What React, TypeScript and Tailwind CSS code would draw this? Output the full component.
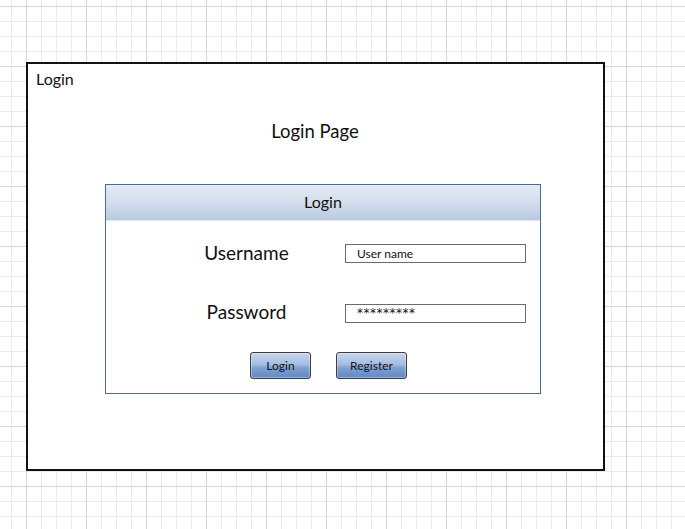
export default function App() {
  return (
    <div className="w-[685px] h-[529px] overflow-hidden bg-white bg-[linear-gradient(to_right,#d6d6d6_1px,transparent_1px),linear-gradient(to_bottom,#d6d6d6_1px,transparent_1px),linear-gradient(to_right,#ebebeb_1px,transparent_1px),linear-gradient(to_bottom,#ebebeb_1px,transparent_1px)] bg-size-[60px_60px,60px_60px,15px_15px,15px_15px] bg-position-[26px_6px,26px_6px,11px_6px,11px_6px] pt-[62px] pl-[26px] font-['Lato','Liberation_Sans',sans-serif] text-[#111]">
      {/* Window */}
      <div className="w-[579px] h-[409px] border-2 border-[#111] bg-white flex flex-col">
        <div className="pt-[6px] pl-[8px] text-[16px] leading-[18px]">Login</div>
        <div className="mt-[32px] text-center text-[18.5px] leading-[22px] pr-[1px]">Login Page</div>

        {/* Login panel */}
        <div className="mt-[42px] ml-[77px] w-[436px] border border-[#4d6b99] bg-white">
          <div className="h-[36px] pb-[2px] bg-[linear-gradient(to_bottom,#e4eaf3,#d3dded_50%,#b8cae1)] border-b border-[#dfe7f1] flex items-center justify-center text-[16px]">
            Login
          </div>

          <div className="pt-[23px] pb-[14px]">
            <div className="flex h-[19px] items-center">
              <div className="w-[239px] pl-[42px] mb-[2px] text-center text-[19px] leading-[19px]">Username</div>
              <div className="w-[181px] h-[19px] border border-[#6b6b6b] pl-[11px] text-[12px] leading-[17px]">User name</div>
            </div>

            <div className="flex h-[19px] items-center mt-[41px]">
              <div className="w-[239px] pl-[42px] mb-[4px] text-center text-[19px] leading-[19px]">Password</div>
              <div className="w-[181px] h-[19px] border border-[#6b6b6b] pl-[11px] font-['DejaVu_Sans',sans-serif] text-[12px] leading-[16px] tracking-[0.5px]">*********</div>
            </div>

            <div className="flex gap-[25px] mt-[29px] ml-[144px]">
              <button className="w-[61px] h-[27px] rounded-[3px] border border-[#3d3d3d] bg-[linear-gradient(to_bottom,#c6d7ee,#a3bee2_45%,#7e9fd0_60%,#6388c0)] shadow-[inset_0_0_0_1px_rgba(255,255,255,0.35)] text-[12px] text-[#111]">
                Login
              </button>
              <button className="w-[71px] h-[27px] rounded-[3px] border border-[#3d3d3d] bg-[linear-gradient(to_bottom,#c6d7ee,#a3bee2_45%,#7e9fd0_60%,#6388c0)] shadow-[inset_0_0_0_1px_rgba(255,255,255,0.35)] text-[12px] text-[#111]">
                Register
              </button>
            </div>
          </div>
        </div>
      </div>
    </div>
  )
}
